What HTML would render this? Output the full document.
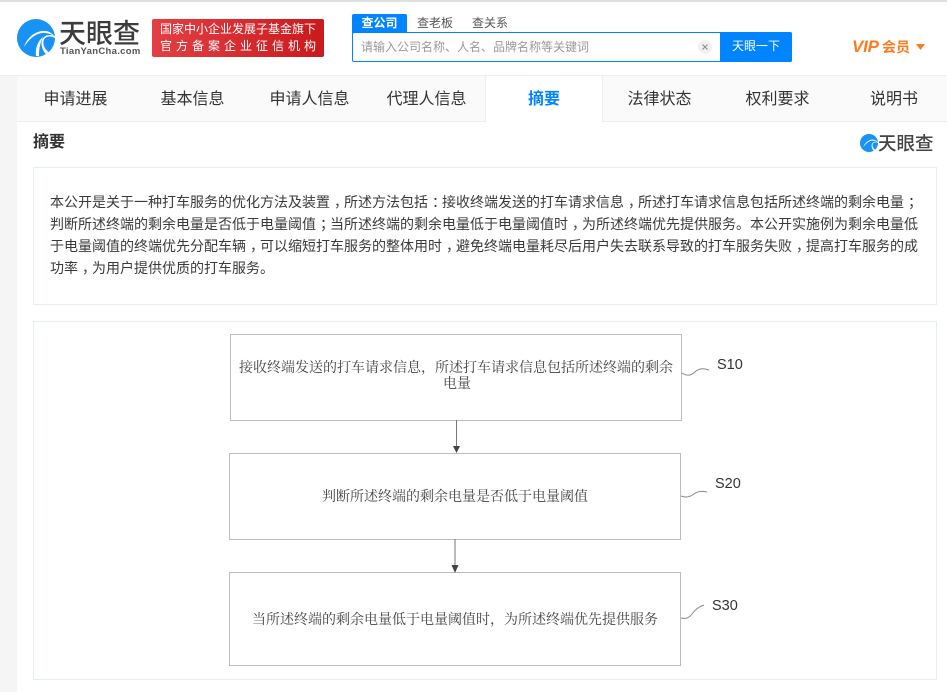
<!DOCTYPE html>
<html lang="zh-CN"><head><meta charset="utf-8"><title>天眼查 摘要</title>
<style>
*{box-sizing:border-box;margin:0;padding:0}
html,body{width:947px;height:692px;overflow:hidden;background:#fff}
body{position:relative;font-family:"Liberation Sans","WenQuanYi Zen Hei","Noto Sans CJK SC",sans-serif;color:#333}
.a{position:absolute;white-space:nowrap}
.tab{position:absolute;top:76px;height:46px;line-height:47px;font-size:16px;text-align:center;color:#333}
.ser{font-family:"Liberation Serif","Noto Serif CJK SC",serif;color:#444;font-size:14px;filter:blur(.3px)}
.fb{position:absolute;border:1.5px solid #bdbdbd;background:#fff;filter:blur(.2px)}
.lbl{font-size:14.500px;color:#333;filter:blur(.3px)}
.logo{font-family:"Noto Sans CJK SC",sans-serif}
i{font-style:normal;position:relative;left:4px}
</style></head><body>
<div class="a" style="left:0;top:0;width:947px;height:2px;background:#e0e0e0"></div>
<div class="a" style="left:0;top:75px;width:947px;height:1px;background:#eee"></div>
<div class="a" style="left:0;top:76px;width:17px;height:616px;background:#f5f5f5"></div>
<div class="a" style="left:17px;top:76px;width:930px;height:46px;background:#fafafa;border-bottom:1px solid #eee"></div>

<svg class="a" style="left:17px;top:19px" width="38" height="38" viewBox="0 0 38 38">
<circle cx="19" cy="19" r="19" fill="#1892f5"/>
<path d="M7 28C10 19 17 13 25 12C30 11.500 34 13 37 17C33 14.500 29 13.500 25 14C18 15 12 20 7 28Z" fill="#fff"/>
<path d="M19 37C18 29 21 22 26 18C23 24 22 30 22 37Z" fill="#fff"/>
<path d="M38 19C34 16.500 29 17 27 20.500C25 25 28 31 33 34L30.500 36C25.500 33 23.500 26 25 21C27 16 33 15 38 17Z" fill="#fff"/>
</svg>
<div class="a logo" style="left:59px;top:16px;font-size:27px;line-height:32px;font-weight:500;color:#3c3c3c">天眼查</div>
<div class="a" style="left:60px;top:46px;font-size:9.500px;line-height:11px;font-weight:700;color:#555;letter-spacing:.3px">TianYanCha.com</div>

<div class="a" style="left:152px;top:19px;width:172px;height:38px;border-radius:2px;background:linear-gradient(90deg,#e33f44,#c91a1d)"></div>
<div class="a" style="left:160px;top:20px;font-size:12px;line-height:18px;color:#fff">国家中小企业发展子基金旗下</div>
<div class="a" style="left:160px;top:37px;font-size:12px;line-height:18px;color:#fff;letter-spacing:4px">官方备案企业征信机构</div>

<div class="a" style="left:352px;top:14px;width:55px;height:19px;background:#0084ff;border-radius:2px 2px 0 0;color:#fff;font-size:12px;font-weight:700;text-align:center;line-height:18px">查公司</div>
<div class="a" style="left:417px;top:13px;font-size:12px;line-height:20px;color:#555">查老板</div>
<div class="a" style="left:472px;top:13px;font-size:12px;line-height:20px;color:#555">查关系</div>
<div class="a" style="left:352px;top:32px;width:440px;height:30px;border:1px solid #0084ff;border-radius:2px;background:#fff"></div>
<div class="a" style="left:720px;top:32px;width:72px;height:30px;background:#0084ff;border-radius:0 2px 2px 0;color:#fff;font-size:12px;line-height:29px;text-align:center">天眼一下</div>
<div class="a" style="left:361px;top:37px;font-size:12px;line-height:20px;color:#999">请输入公司名称、人名、品牌名称等关键词</div>
<div class="a" style="left:698px;top:40px;width:14px;height:14px;border-radius:50%;background:#f1f1f1"></div>
<svg class="a" style="left:698px;top:40px" width="14" height="14"><path d="M4.500 4.500L9.500 9.500M9.500 4.500L4.500 9.500" stroke="#888" stroke-width="1"/></svg>
<div class="a" style="left:852px;top:37px;font-size:17px;line-height:20px;font-weight:700;font-style:italic;color:#ff7a1f;letter-spacing:-.2px">VIP</div>
<div class="a logo" style="left:882px;top:38px;font-size:14px;line-height:18px;font-weight:700;color:#ff7a1f">会员</div>
<svg class="a" style="left:915px;top:43px" width="11" height="8"><path d="M1 1H10L5.500 7Z" fill="#ff7a1f"/></svg>

<div class="tab" style="left:17px;width:117px">申请进展</div>
<div class="tab" style="left:134px;width:117px">基本信息</div>
<div class="tab" style="left:251px;width:117px">申请人信息</div>
<div class="tab" style="left:368px;width:117px">代理人信息</div>
<div class="tab" style="left:485px;width:118px;height:47px;background:#fff;border-left:1px solid #eee;border-right:1px solid #eee;color:#0084ff;font-weight:700">摘要</div>
<div class="tab" style="left:603px;width:117px;padding-right:4px">法律状态</div>
<div class="tab" style="left:720px;width:115px">权利要求</div>
<div class="tab" style="left:836px;width:116px">说明书</div>

<div class="a" style="left:33px;top:132px;font-size:16px;line-height:22px;font-weight:700;color:#333">摘要</div>
<svg class="a" style="left:860px;top:134px" width="18" height="18" viewBox="0 0 38 38">
<circle cx="19" cy="19" r="19" fill="#1892f5"/>
<path d="M7 28C10 19 17 13 25 12C30 11.500 34 13 37 17C33 14.500 29 13.500 25 14C18 15 12 20 7 28Z" fill="#fff"/>
<path d="M38 19C34 16.500 29 17 27 20.500C25 25 28 31 33 34L30.500 36C25.500 33 23.500 26 25 21C27 16 33 15 38 17Z" fill="#fff"/>
</svg>
<div class="a logo" style="left:878px;top:132px;font-size:18.500px;line-height:22px;font-weight:500;color:#444">天眼查</div>

<div class="a" style="left:33px;top:167px;width:904px;height:138px;border:1px solid #e6eef5"></div>
<div class="a" style="left:50px;top:191px;font-size:14px;line-height:22px;color:#3a3a3a">本公开是关于一种打车服务的优化方法及装置<i>，</i>所述方法包括<i>：</i>接收终端发送的打车请求信息<i>，</i>所述打车请求信息包括所述终端的剩余电量<i>；</i><br>判断所述终端的剩余电量是否低于电量阈值<i>；</i>当所述终端的剩余电量低于电量阈值时<i>，</i>为所述终端优先提供服务。本公开实施例为剩余电量低<br>于电量阈值的终端优先分配车辆<i>，</i>可以缩短打车服务的整体用时<i>，</i>避免终端电量耗尽后用户失去联系导致的打车服务失败<i>，</i>提高打车服务的成<br>功率<i>，</i>为用户提供优质的打车服务。</div>

<div class="a" style="left:33px;top:321px;width:904px;height:359px;border:1px solid #e6eef5"></div>
<div class="fb" style="left:230px;top:334px;width:452px;height:87px"></div>
<div class="fb" style="left:229px;top:453px;width:452px;height:87px"></div>
<div class="fb" style="left:229px;top:572px;width:452px;height:94px"></div>
<div class="a ser" style="left:239px;top:360px;line-height:18px">接收终端发送的打车请求信息，所述打车请求信息包括所述终端的剩余</div>
<div class="a ser" style="left:443px;top:376px;line-height:18px">电量</div>
<div class="a ser" style="left:322px;top:489px;line-height:18px">判断所述终端的剩余电量是否低于电量阈值</div>
<div class="a ser" style="left:252px;top:612px;line-height:18px">当所述终端的剩余电量低于电量阈值时，为所述终端优先提供服务</div>
<svg class="a" style="left:440px;top:415px;filter:blur(.2px)" width="260" height="220">
<path d="M16.500 5V35M15 124V154" stroke="#777" fill="none"/>
<path d="M13 31H20L16.500 38Z M11.500 150H18.500L15 158Z" fill="#444"/>
</svg>
<svg class="a" style="left:680px;top:340px;filter:blur(.25px)" width="60" height="300">
<path d="M2 33C8 37 12 35 16 31C20 28 24 28 29 30" stroke="#888" fill="none"/>
<path d="M1 156C6 158 10 157 14 154C18 151 22 151 27 152" stroke="#888" fill="none"/>
<path d="M1 278C6 279 9 278 12 274C15 270 18 267 24 265" stroke="#888" fill="none"/>
</svg>
<div class="a lbl" style="left:717px;top:356px;line-height:18px">S10</div>
<div class="a lbl" style="left:715px;top:475px;line-height:18px">S20</div>
<div class="a lbl" style="left:712px;top:597px;line-height:18px">S30</div>
</body></html>
